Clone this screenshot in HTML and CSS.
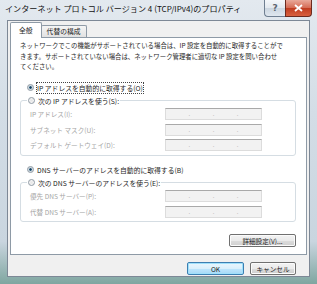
FILE: index.html
```html
<!DOCTYPE html>
<html>

<head>
    <link rel="stylesheet" href="styles.css">
</head>

<body>
    <div class="window">
        <div class="titlebar">
            <p class="title">インターネット プロトコル バージョン 4 (TCP/IPv4)のプロパティ</p>
            <div class="caption_btns">
                <span class="btn_help">?</span>
                <span class="btn_close">
                    <svg width="9" height="8" viewBox="0 0 9 8">
                        <path d="M1 1 L8 7 M8 1 L1 7" stroke="#ffffff" stroke-width="1.8" />
                    </svg>
                </span>
            </div>
        </div>
        <div class="client">
            <div class="tabs">
                <span class="tab tab_active">全般</span>
                <span class="tab">代替の構成</span>
            </div>
            <div class="panel">
                <p class="desc">ネットワークでこの機能がサポートされている場合は、IP 設定を自動的に取得することがで<br>きます。サポートされていない場合は、ネットワーク管理者に適切な IP 設定を問い合わせ<br>てください。</p>

                <div class="radio_line radio_first">
                    <span class="radio radio_on"></span>
                    <span class="focus">IP アドレスを自動的に取得する(O)</span>
                </div>
                <fieldset class="group">
                    <legend class="radio_line">
                        <span class="radio"></span>
                        <span>次の IP アドレスを使う(S):</span>
                    </legend>
                    <div class="row">
                        <span class="label">IP アドレス(I):</span>
                        <div class="ipbox"><span></span>.<span></span>.<span></span>.<span></span></div>
                    </div>
                    <div class="row">
                        <span class="label">サブネット マスク(U):</span>
                        <div class="ipbox"><span></span>.<span></span>.<span></span>.<span></span></div>
                    </div>
                    <div class="row">
                        <span class="label">デフォルト ゲートウェイ(D):</span>
                        <div class="ipbox"><span></span>.<span></span>.<span></span>.<span></span></div>
                    </div>
                </fieldset>

                <div class="radio_line radio_dns">
                    <span class="radio radio_on"></span>
                    <span>DNS サーバーのアドレスを自動的に取得する(B)</span>
                </div>
                <fieldset class="group group_dns">
                    <legend class="radio_line">
                        <span class="radio"></span>
                        <span>次の DNS サーバーのアドレスを使う(E):</span>
                    </legend>
                    <div class="row">
                        <span class="label">優先 DNS サーバー(P):</span>
                        <div class="ipbox"><span></span>.<span></span>.<span></span>.<span></span></div>
                    </div>
                    <div class="row">
                        <span class="label">代替 DNS サーバー(A):</span>
                        <div class="ipbox"><span></span>.<span></span>.<span></span>.<span></span></div>
                    </div>
                </fieldset>

                <div class="adv_row">
                    <button class="btn btn_adv">詳細設定(V)...</button>
                </div>
            </div>
            <div class="buttons">
                <button class="btn btn_ok">OK</button>
                <button class="btn btn_cancel">キャンセル</button>
            </div>
        </div>
    </div>
</body>

</html>
```

FILE: styles.css
```css
body {
    margin: 0;
    font-family: "Noto Sans CJK JP", "Noto Sans", sans-serif;
    color: #1e1e1e;
}

p {
    margin: 0;
}

.window {
    width: 317px;
    height: 284px;
    display: flex;
    flex-direction: column;
    background: linear-gradient(180deg, #e3e9ef 0%, #d3dde6 40%, #c9d5df 85%, #7fa6a0 100%);
}

.titlebar {
    height: 20px;
    display: flex;
    justify-content: space-between;
    align-items: flex-start;
}

.title {
    font-size: 8.1px;
    line-height: 10px;
    margin: 4px 0 0 5px;
    color: #111;
    white-space: nowrap;
}

.caption_btns {
    display: flex;
    margin-right: 5px;
}

.btn_help,
.btn_close {
    height: 16px;
    display: flex;
    align-items: center;
    justify-content: center;
    border: 1px solid #6f7f91;
    border-top: none;
}

.btn_help {
    width: 20px;
    border-right: none;
    border-bottom-left-radius: 4px;
    background: linear-gradient(180deg, #f4f7fa 0%, #e3e9ef 50%, #ccd6e0 51%, #dfe7ef 100%);
    font-size: 9px;
    font-weight: bold;
    color: #5c6670;
    font-family: "DejaVu Sans", sans-serif;
}

.btn_close {
    width: 25px;
    border-color: #6b2a1f;
    border-bottom-right-radius: 4px;
    background: linear-gradient(180deg, #e9a99a 0%, #d56c55 48%, #c03d20 52%, #d8603f 100%);
}

.client {
    flex: 1;
    margin: 0 7px 7px 7px;
    border: 1px solid #7d8896;
    background: #f0f0f0;
    display: flex;
    flex-direction: column;
}

.tabs {
    display: flex;
    align-items: flex-end;
    margin: 1px 0 0 2px;
    height: 15px;
    position: relative;
    z-index: 1;
}

.tab {
    font-size: 6.8px;
    height: 11px;
    line-height: 11px;
    padding: 0 5px;
    border: 1px solid #8e9aa6;
    border-bottom: none;
    border-radius: 2px 2px 0 0;
    background: linear-gradient(180deg, #f5f5f5, #e2e2e2);
    margin-left: -1px;
}

.tab_active {
    height: 15px;
    line-height: 14px;
    padding: 0 8px;
    margin-left: 0;
    margin-bottom: -1px;
    background: #ffffff;
}

.panel {
    height: 216px;
    margin: 0 2px 0 2px;
    border: 1px solid #8e9aa6;
    background: #ffffff;
    display: flex;
    flex-direction: column;
    align-items: flex-start;
}

.desc {
    font-size: 6.4px;
    line-height: 10.5px;
    margin: 3px 0 0 9px;
    white-space: nowrap;
}

.radio_line {
    display: flex;
    align-items: center;
    font-size: 6.8px;
    height: 10px;
    line-height: 10px;
}

.radio_first {
    margin: 10px 0 0 16px;
}

.radio_dns {
    margin: 9px 0 0 16px;
}

.radio {
    width: 7px;
    height: 7px;
    border: 1px solid #8f9aa4;
    border-radius: 50%;
    margin-right: 3px;
    background: radial-gradient(circle, #e6e6e6, #fafafa);
    box-sizing: border-box;
}

.radio_on {
    background: radial-gradient(circle, #1c3b57 0, #2e5f7f 30%, #c8d3dc 45%, #f4f4f4 100%);
}

.focus {
    outline: 1px dotted #444;
    outline-offset: 0;
}

.group {
    margin: 3px 0 0 9px;
    width: 276px;
    box-sizing: border-box;
    border: 1px solid #d5dde3;
    border-radius: 3px;
    padding: 2px 0 3px 9px;
}

.group legend {
    padding: 0 1px 0 1px;
    margin-left: -3px;
    color: #1e1e1e;
}

.group_dns {
    margin-top: 3px;
}

.row {
    display: flex;
    align-items: center;
    height: 13px;
    margin-bottom: 2.5px;
}

.row:last-child {
    margin-bottom: 0;
}

.label {
    width: 135px;
    font-size: 6.6px;
    color: #a5a5a5;
}

.ipbox {
    width: 97px;
    height: 12px;
    box-sizing: border-box;
    border: 1px solid #dcdcdc;
    border-top-color: #a9a9a9;
    background: #f2f2f2;
    display: flex;
    align-items: center;
    font-size: 6px;
    line-height: 6px;
    color: #a8a8a8;
}

.ipbox span {
    flex: 1;
}

.adv_row {
    width: 285px;
    display: flex;
    justify-content: flex-end;
    margin-top: 12px;
}

.btn {
    font-family: "Noto Sans CJK JP", sans-serif;
    font-size: 6.6px;
    color: #1e1e1e;
    height: 13px;
    padding: 0;
    border: 1px solid #707070;
    border-radius: 2px;
    background: linear-gradient(180deg, #f2f2f2 0%, #ebebeb 50%, #dddddd 51%, #cfcfcf 100%);
    box-shadow: inset 0 0 0 1px #fbfbfb;
}

.btn_adv {
    width: 67px;
}

.buttons {
    display: flex;
    justify-content: flex-end;
    gap: 6px;
    margin: 7px 13px 0 0;
}

.btn_ok {
    width: 57px;
    border-color: #3c7fb1;
    box-shadow: inset 0 0 0 1px #9fe0fb;
    background: linear-gradient(180deg, #eaf6fd 0%, #d9f0fc 50%, #bee6fd 51%, #a7d9f5 100%);
}

.btn_cancel {
    width: 46px;
}
```
